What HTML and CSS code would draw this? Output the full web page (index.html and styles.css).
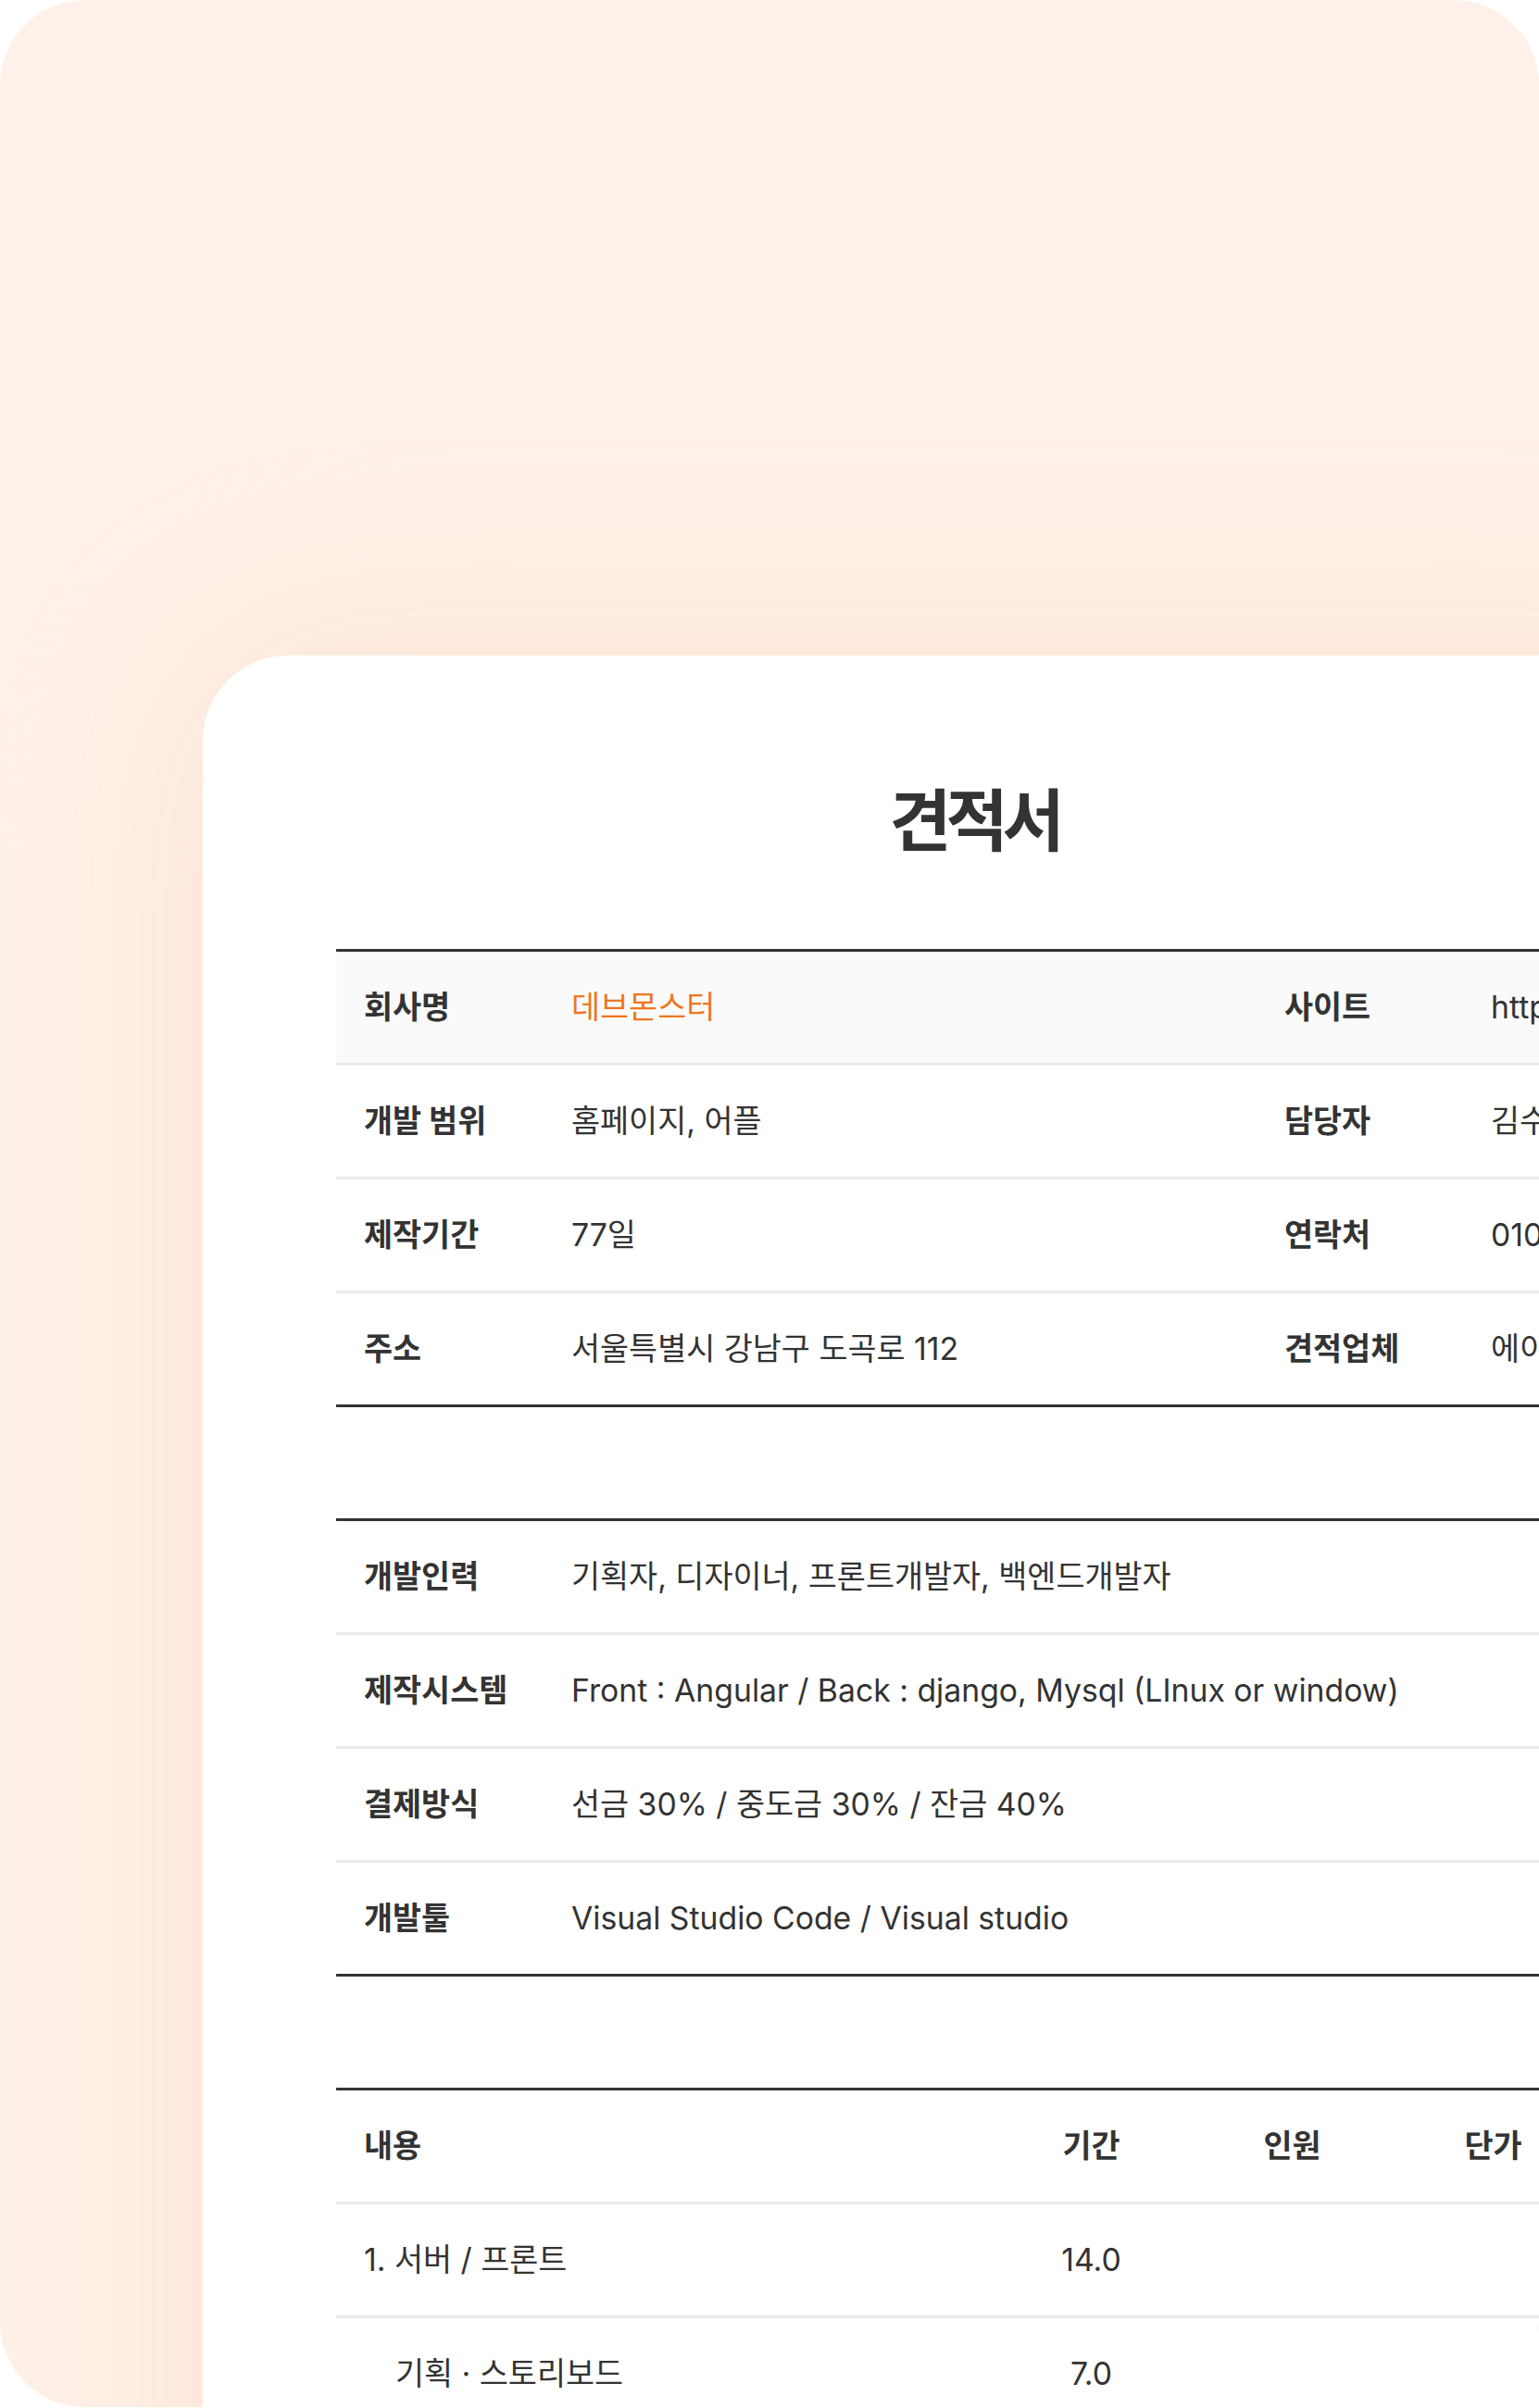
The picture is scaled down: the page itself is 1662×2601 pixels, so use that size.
FILE: index.html
```html
<!DOCTYPE html>
<html lang="ko">
<head>
<meta charset="utf-8">
<title>견적서</title>
<link rel="stylesheet" href="styles.css">
</head>
<body>
<div class="frame">
  <div class="sheet">
    <h1 class="title">견적서</h1>

    <div class="table info">
      <div class="row shaded">
        <div class="cell label">회사명</div>
        <div class="cell value accent">데브몬스터</div>
        <div class="cell label">사이트</div>
        <div class="cell value">https://www.devmonster.co.kr</div>
      </div>
      <div class="row">
        <div class="cell label">개발 범위</div>
        <div class="cell value">홈페이지, 어플</div>
        <div class="cell label">담당자</div>
        <div class="cell value">김수현</div>
      </div>
      <div class="row">
        <div class="cell label">제작기간</div>
        <div class="cell value">77일</div>
        <div class="cell label">연락처</div>
        <div class="cell value">010-1234-5678</div>
      </div>
      <div class="row">
        <div class="cell label">주소</div>
        <div class="cell value">서울특별시 강남구 도곡로 112</div>
        <div class="cell label">견적업체</div>
        <div class="cell value">에이전시</div>
      </div>
    </div>

    <div class="table spec">
      <div class="row">
        <div class="cell label">개발인력</div>
        <div class="cell value">기획자, 디자이너, 프론트개발자, 백엔드개발자</div>
      </div>
      <div class="row">
        <div class="cell label">제작시스템</div>
        <div class="cell value">Front : Angular / Back : django, Mysql (LInux or window)</div>
      </div>
      <div class="row">
        <div class="cell label">결제방식</div>
        <div class="cell value">선금 30% / 중도금 30% / 잔금 40%</div>
      </div>
      <div class="row">
        <div class="cell label">개발툴</div>
        <div class="cell value">Visual Studio Code / Visual studio</div>
      </div>
    </div>

    <div class="table items">
      <div class="row head">
        <div class="cell label">내용</div>
        <div class="cell label num">기간</div>
        <div class="cell label num">인원</div>
        <div class="cell label num">단가</div>
      </div>
      <div class="row">
        <div class="cell value">1. 서버 / 프론트</div>
        <div class="cell value num">14.0</div>
        <div class="cell value num"></div>
        <div class="cell value num"></div>
      </div>
      <div class="row">
        <div class="cell value sub">기획 · 스토리보드</div>
        <div class="cell value num">7.0</div>
        <div class="cell value num"></div>
        <div class="cell value num"></div>
      </div>
      <div class="row">
        <div class="cell value sub">디자인</div>
        <div class="cell value num">7.0</div>
        <div class="cell value num"></div>
        <div class="cell value num"></div>
      </div>
    </div>
  </div>
</div>
</body>
</html>
```

FILE: styles.css
```css
html, body {
  margin: 0;
  padding: 0;
  background: #ffffff;
}

body {
  width: 1662px;
  height: 2601px;
  overflow: hidden;
  font-family: Inter, "Noto Sans CJK KR", sans-serif;
  color: #333333;
}

.frame {
  width: 1662px;
  height: 2600px;
  border-radius: 92px;
  overflow: hidden;
  background: #fef1e9;
  padding: 708px 0 0 219px;
  box-sizing: border-box;
}

.sheet {
  width: 1666px;
  min-height: 2200px;
  box-sizing: border-box;
  padding: 126px 144px 200px;
  background: #ffffff;
  border-radius: 92px 92px 0 0;
  box-shadow: 0 0 230px 0 rgba(251, 216, 190, 0.62);
}

.title {
  margin: 0 0 96px;
  text-align: center;
  font-family: "Noto Sans CJK KR", sans-serif;
  font-size: 73px;
  font-weight: 700;
  line-height: 95px;
  letter-spacing: -6px;
  color: #333333;
}

.table {
  border-top: 3px solid #333333;
  border-bottom: 3px solid #333333;
  margin-bottom: 120px;
}

.row {
  display: grid;
  height: 123px;
  box-sizing: border-box;
  border-bottom: 3px solid #ebebeb;
  align-items: center;
}

.row:last-child {
  border-bottom: 0;
  height: 120px;
}

.info .row {
  grid-template-columns: 224px 770px 223px 1fr;
}

.spec .row {
  grid-template-columns: 224px 1fr;
}

.items .row {
  grid-template-columns: 707px 217px 217px 217px;
}

.shaded {
  background: #fafafa;
}

.cell {
  padding-left: 30px;
  font-size: 33.75px;
  line-height: 42px;
  white-space: nowrap;
  overflow: hidden;
}

.label {
  font-weight: 700;
}

.value {
  font-weight: 400;
}

.accent {
  color: #f0761e;
}

.num {
  padding-left: 0;
  text-align: center;
}

.sub {
  padding-left: 64px;
}
```
